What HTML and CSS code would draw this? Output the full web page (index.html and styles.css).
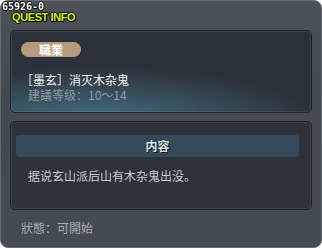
FILE: index.html
```html
<!DOCTYPE html>
<html lang="zh">
<head>
  <meta charset="UTF-8">
  <title>Quest Info</title>
  <link rel="stylesheet" href="styles.css">
</head>
<body>
  <div class="panel">
    <div class="panel-head">
      <div class="quest-id">65926-0</div>
      <div class="quest-title">QUEST INFO</div>
    </div>
    <div class="card card-info">
      <div class="badge">職業</div>
      <div class="info-text">
        <div class="info-name">［墨玄］消灭木杂鬼</div>
        <div class="info-level">建議等级：10～14</div>
      </div>
    </div>
    <div class="card card-content">
      <div class="content-bar">内容</div>
      <div class="content-text">据说玄山派后山有木杂鬼出没。</div>
    </div>
    <div class="status">狀態：可開始</div>
  </div>
</body>
</html>
```

FILE: styles.css
```css
:root {
  --painel: #454c53;
  --painel-borda: #646c74;
  --card-borda: #1f242a;
  --texto-claro: #c6cbd0;
  --texto-cinza: #8e99a2;
  --cjk: "Noto Sans CJK SC", "Noto Sans CJK TC", sans-serif;
}
* { box-sizing: border-box; margin: 0; padding: 0; }
body {
  background: #fff;
  font-family: var(--cjk);
  font-size: 12px;
}
.panel {
  width: 322px;
  height: 248px;
  border: 1px solid var(--painel-borda);
  border-radius: 8px;
  background: linear-gradient(#4a5259, #434a51 40%, #444b52);
  padding: 0 9px;
}
.panel-head {
  height: 29px;
  margin: 0 -9px;
}
.quest-id {
  font-family: "DejaVu Sans Mono", monospace;
  font-weight: bold;
  font-size: 10px;
  line-height: 11px;
  color: #fff;
  padding-left: 1px;
  text-shadow: 1px 0 #000, -1px 0 #000, 0 1px #000, 0 -1px #000;
}
.quest-title {
  font-family: "Liberation Sans", Arial, sans-serif;
  font-weight: bold;
  font-size: 11px;
  line-height: 10px;
  letter-spacing: -0.4px;
  color: #d6f21e;
  padding-left: 11px;
  text-shadow: 1px 0 #000, -1px 0 #000, 0 1px #000, 0 -1px #000, 1px 1px #000;
}
.card {
  border: 1px solid var(--card-borda);
  border-radius: 5px;
  box-shadow: inset 0 0 0 1px rgba(255, 255, 255, 0.08);
}
.card-info {
  height: 83px;
  padding: 11px 10px 0;
  background:
    radial-gradient(ellipse 75% 70% at 28% 115%, rgba(72, 122, 138, 0.9), rgba(72, 122, 138, 0) 100%),
    linear-gradient(#2b313a, #2c323b);
}
.badge {
  width: 60px;
  height: 15px;
  border-radius: 8px;
  background: #b59b7b;
  color: #fff;
  font-weight: bold;
  line-height: 15px;
  text-align: center;
}
.info-text {
  margin-top: 15px;
}
.info-name {
  color: #f2f2f2;
  line-height: 16px;
}
.info-level {
  color: var(--texto-cinza);
  line-height: 14px;
  padding-left: 7px;
}
.card-content {
  margin-top: 8px;
  height: 89px;
  padding: 13px 12px 0 5px;
  background: #2d323a;
}
.content-bar {
  height: 22px;
  line-height: 22px;
  border-radius: 3px;
  background: #34495a;
  color: #dbe2e6;
  font-weight: bold;
  text-align: center;
  text-shadow: 1px 1px #111;
}
.content-text {
  margin-top: 12px;
  padding-left: 12px;
  line-height: 14px;
  color: var(--texto-claro);
}
.status {
  margin-top: 11px;
  padding-left: 11px;
  line-height: 14px;
  color: #a7afb7;
}
```
